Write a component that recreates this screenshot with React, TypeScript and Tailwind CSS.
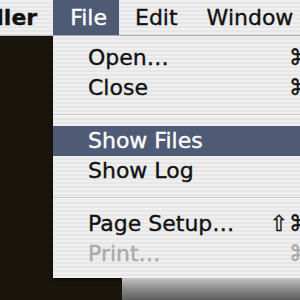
import React from 'react';

type Item = { label: string; mods?: string; key?: string; disabled?: boolean; active?: boolean };

const groups: Item[][] = [
  [
    { label: 'Open…', key: 'O' },
    { label: 'Close', key: 'W' },
  ],
  [{ label: 'Show Files', active: true }, { label: 'Show Log' }],
  [
    { label: 'Page Setup…', mods: '⇧', key: 'P' },
    { label: 'Print…', key: 'P', disabled: true },
  ],
];

const stripes =
  'bg-[repeating-linear-gradient(to_bottom,#efefef_0px,#efefef_2px,#e6e6e6_2px,#e6e6e6_4px)]';

const MenuRow: React.FC<{ item: Item }> = ({ item }) => {
  const tone = item.active ? 'bg-[#4f5b74] text-white' : item.disabled ? 'text-[#a9a9a9]' : 'text-[#111]';
  return (
    <div className={`grid h-[30px] grid-cols-[178px_auto] pl-[35px] leading-[30px] ${tone}`}>
      <span className="whitespace-nowrap">{item.label}</span>
      {item.key ? (
        <span className="flex whitespace-nowrap">
          <span className="w-[23px] pr-[1px] text-right">{item.mods}</span>
          <span>⌘{item.key}</span>
        </span>
      ) : (
        <span />
      )}
    </div>
  );
};

const App: React.FC = () => {
  return (
    <div className="flex h-[300px] w-[300px] flex-col overflow-hidden bg-[#1a160e] font-['DejaVu_Sans','Noto_Sans_CJK_JP',sans-serif] text-[22px] [-webkit-text-stroke:0.35px]">
      <div className={`flex h-[36px] shrink-0 items-stretch border-b border-[#b9b9b9] leading-[35px] text-[#111] ${stripes}`}>
        <span className="-ml-[66px] font-bold">Installer</span>
        <span className="ml-[16px] bg-[#4f5b74] pl-[17px] pr-[12px] text-white">File</span>
        <span className="pl-[16px] pr-[15px]">Edit</span>
        <span className="pl-[14px]">Window</span>
      </div>

      <div className="ml-[53px] flex flex-1 flex-col">
        <div className={`w-[280px] shrink-0 pt-[7px] pb-[9px] shadow-[0_2px_4px_rgba(0,0,0,0.5)] ${stripes}`}>
          {groups.map((group, gi) => (
            <div key={gi}>
              {gi > 0 && (
                <div className="flex h-[23px] items-center">
                  <div className="h-[2px] w-full border-t border-[#c9c9c9] bg-[#f7f7f7]" />
                </div>
              )}
              {group.map((item) => (
                <MenuRow key={item.label} item={item} />
              ))}
            </div>
          ))}
        </div>
        <div className="ml-[69px] flex-1 bg-[linear-gradient(to_bottom,#c4c4c4,#8a8a8a_50%,#5e5e5e)]" />
      </div>
    </div>
  );
};

export default App;
